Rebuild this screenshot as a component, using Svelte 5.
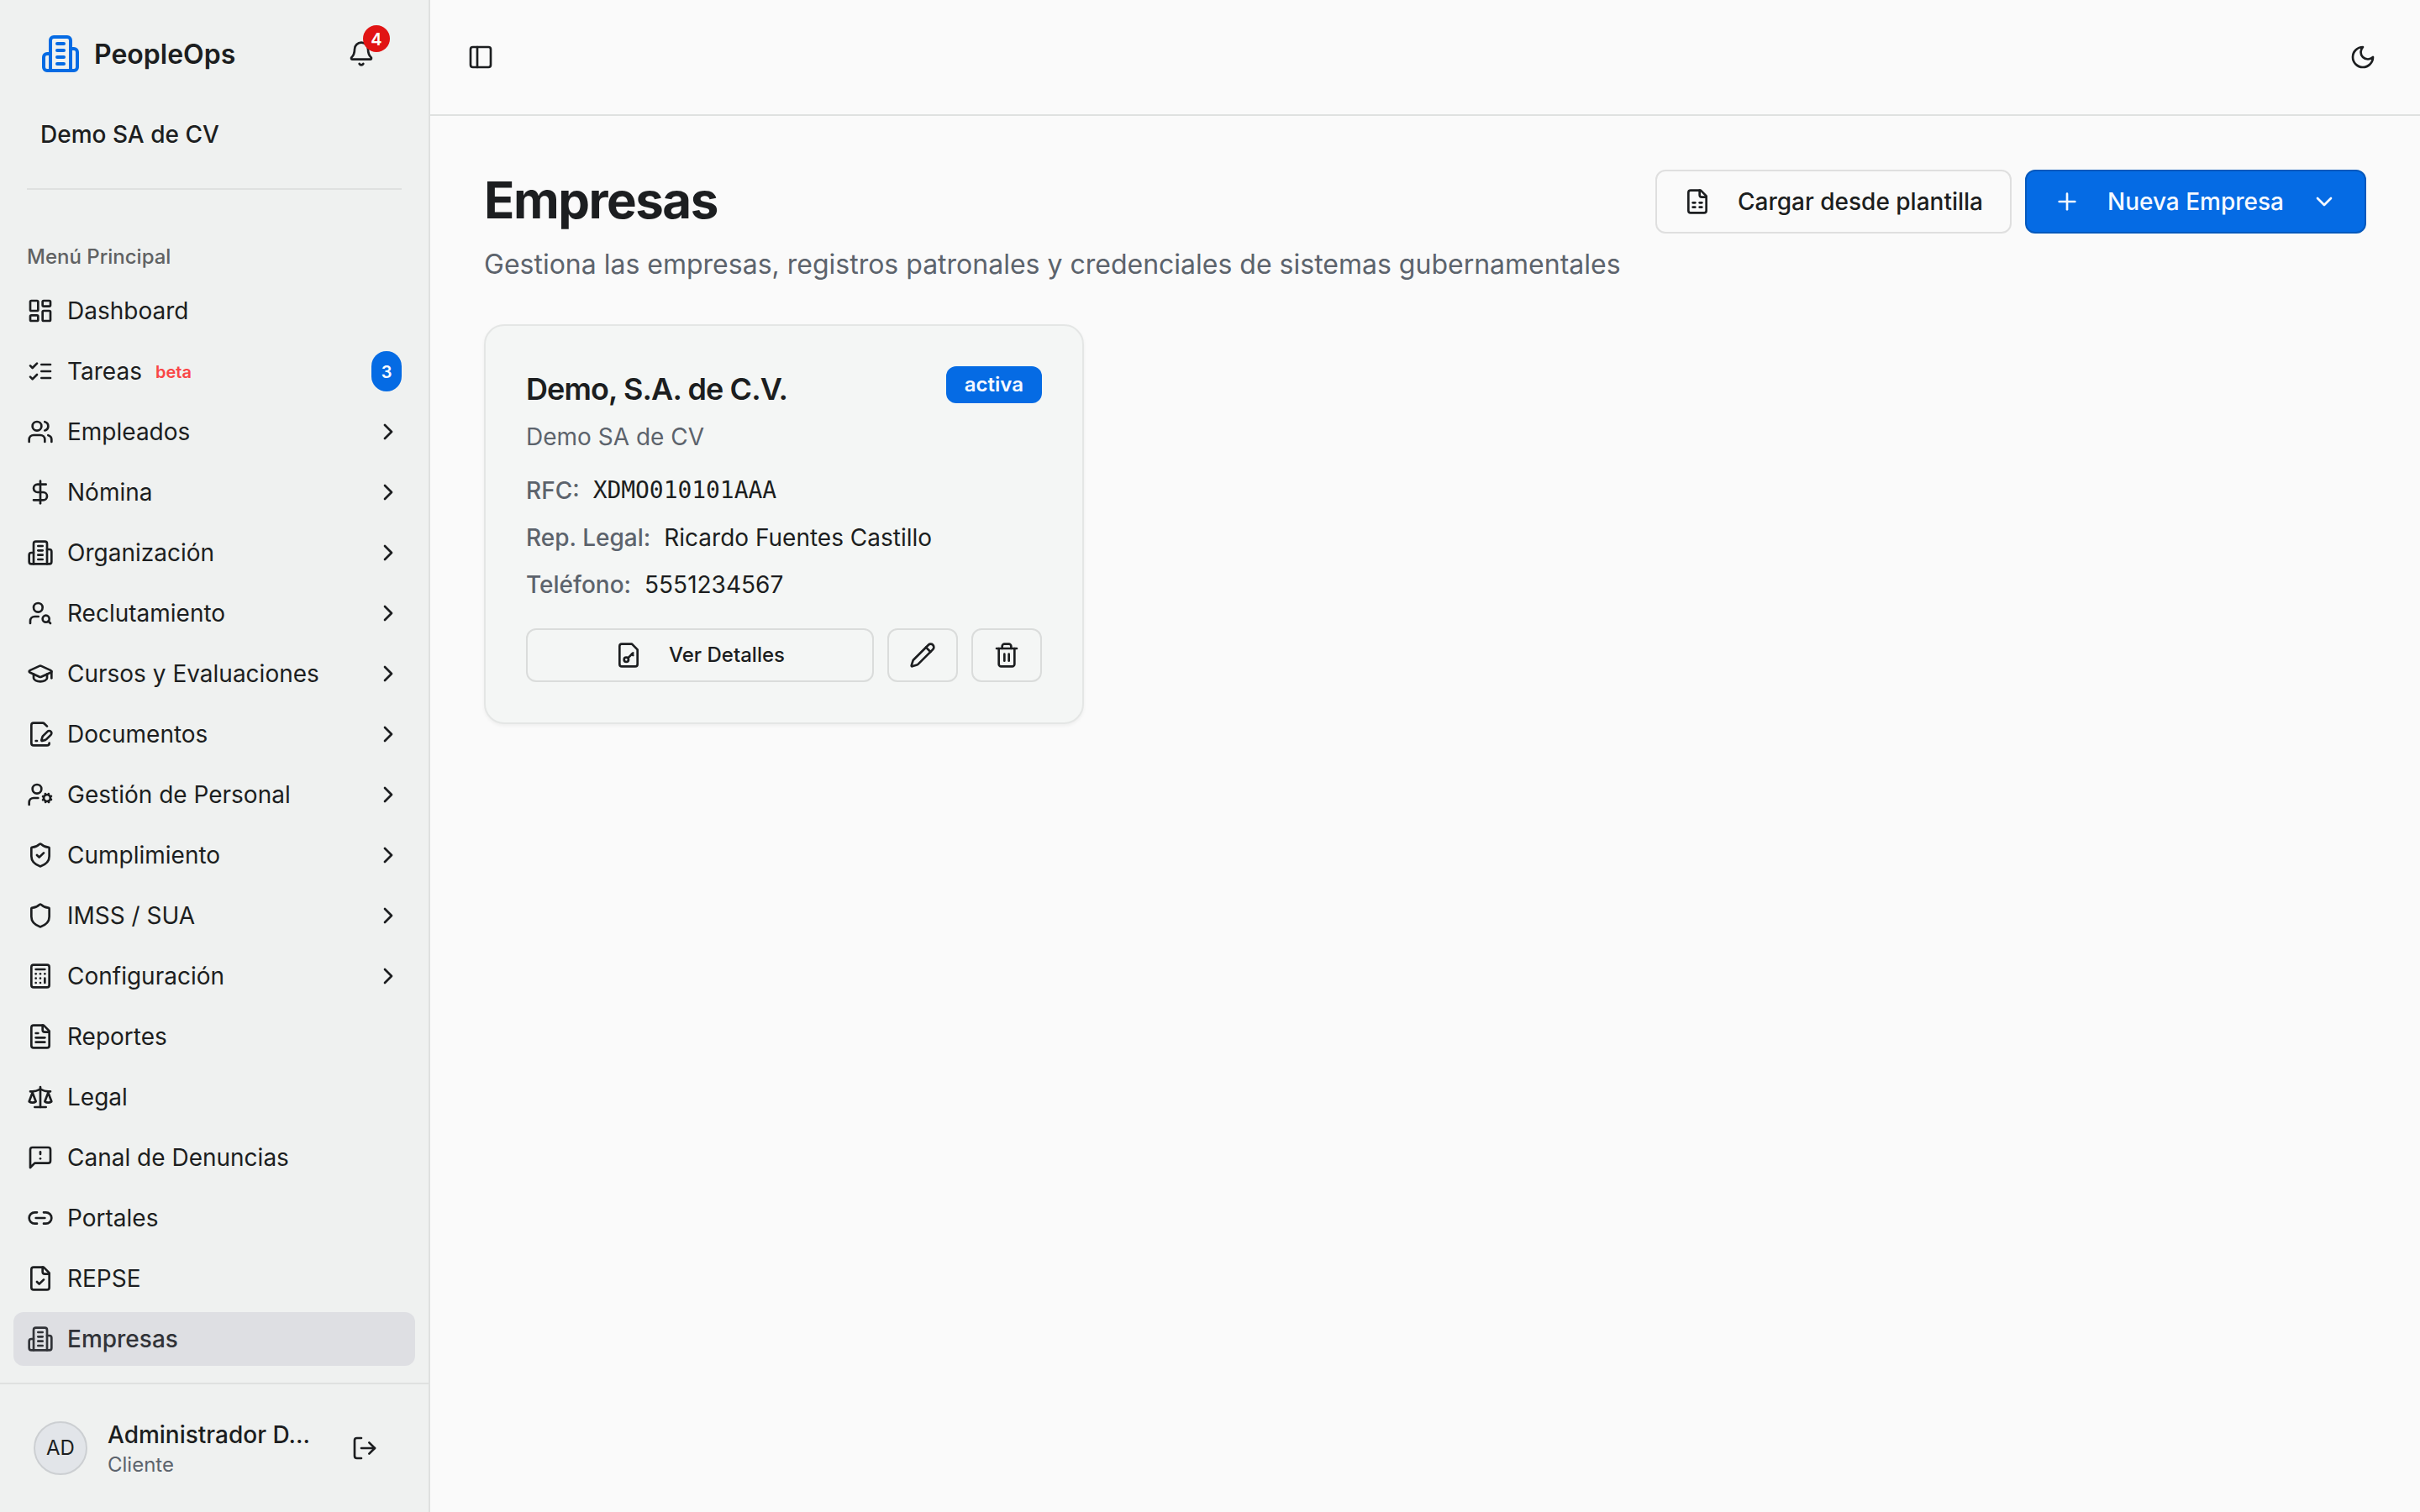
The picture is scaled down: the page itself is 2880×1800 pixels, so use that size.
<script>
  const building =
    '<path d="M6 22V4a2 2 0 0 1 2-2h8a2 2 0 0 1 2 2v18Z"/><path d="M6 12H4a2 2 0 0 0-2 2v6a2 2 0 0 0 2 2h2"/><path d="M18 9h2a2 2 0 0 1 2 2v9a2 2 0 0 1-2 2h-2"/><path d="M10 6h4"/><path d="M10 10h4"/><path d="M10 14h4"/><path d="M10 18h4"/>';
  const shield =
    '<path d="M20 13c0 5-3.5 7.5-7.66 8.95a1 1 0 0 1-.67-.01C7.5 20.5 4 18 4 13V6a1 1 0 0 1 1-1c2 0 4.5-1.2 6.24-2.72a1.17 1.17 0 0 1 1.52 0C14.51 3.81 17 5 19 5a1 1 0 0 1 1 1z"/>';
  const sheet = '<path d="M15 2H6a2 2 0 0 0-2 2v16a2 2 0 0 0 2 2h12a2 2 0 0 0 2-2V7Z"/>';
  const file = sheet + '<path d="M14 2v4a2 2 0 0 0 2 2h4"/>';

  const icons = {
    building,
    shield,
    bell: '<path d="M10.268 21a2 2 0 0 0 3.464 0"/><path d="M3.262 15.326A1 1 0 0 0 4 17h16a1 1 0 0 0 .74-1.673C19.41 13.956 18 12.499 18 8A6 6 0 0 0 6 8c0 4.499-1.411 5.956-2.738 7.326"/>',
    dashboard:
      '<rect width="7" height="9" x="3" y="3" rx="1"/><rect width="7" height="5" x="14" y="3" rx="1"/><rect width="7" height="9" x="14" y="12" rx="1"/><rect width="7" height="5" x="3" y="16" rx="1"/>',
    tasks: '<path d="m3 17 2 2 4-4"/><path d="m3 7 2 2 4-4"/><path d="M13 6h8"/><path d="M13 12h8"/><path d="M13 18h8"/>',
    users:
      '<path d="M16 21v-2a4 4 0 0 0-4-4H6a4 4 0 0 0-4 4v2"/><circle cx="9" cy="7" r="4"/><path d="M22 21v-2a4 4 0 0 0-3-3.87"/><path d="M16 3.13a4 4 0 0 1 0 7.75"/>',
    dollar: '<path d="M12 2v20"/><path d="M17 5H9.5a3.5 3.5 0 0 0 0 7h5a3.5 3.5 0 0 1 0 7H6"/>',
    userSearch:
      '<circle cx="10" cy="7" r="4"/><path d="M10.3 15H7a4 4 0 0 0-4 4v2"/><circle cx="17" cy="17" r="3"/><path d="m21 21-1.9-1.9"/>',
    cap: '<path d="M21.42 10.922a1 1 0 0 0-.019-1.838L12.83 5.18a2 2 0 0 0-1.66 0L2.6 9.08a1 1 0 0 0 0 1.832l8.57 3.908a2 2 0 0 0 1.66 0z"/><path d="M22 10v6"/><path d="M6 12.5V16a6 3 0 0 0 12 0v-3.5"/>',
    filePen:
      '<path d="m18 5-2.414-2.414A2 2 0 0 0 14.172 2H6a2 2 0 0 0-2 2v16a2 2 0 0 0 2 2h12a2 2 0 0 0 2-2"/><path d="M21.378 12.626a1 1 0 0 0-3.004-3.004l-4.01 4.012a2 2 0 0 0-.506.854l-.837 2.87a.5.5 0 0 0 .62.62l2.87-.837a2 2 0 0 0 .854-.506z"/><path d="M8 18h1"/>',
    userCog:
      '<circle cx="18" cy="15" r="3"/><circle cx="9" cy="7" r="4"/><path d="M10 15H6a4 4 0 0 0-4 4v2"/><path d="m21.7 16.4-.9-.3"/><path d="m15.2 13.9-.9-.3"/><path d="m16.6 18.7.3-.9"/><path d="m19.1 12.2.3-.9"/><path d="m19.6 18.7-.4-1"/><path d="m16.8 12.3-.4-1"/><path d="m14.3 16.6 1-.4"/><path d="m20.7 13.8 1-.4"/>',
    shieldCheck: shield + '<path d="m9 12 2 2 4-4"/>',
    calculator:
      '<rect width="16" height="20" x="4" y="2" rx="2"/><path d="M8 6h8"/><path d="M16 14v4"/><path d="M16 10h.01"/><path d="M12 10h.01"/><path d="M8 10h.01"/><path d="M12 14h.01"/><path d="M8 14h.01"/><path d="M12 18h.01"/><path d="M8 18h.01"/>',
    fileText: file + '<path d="M10 9H8"/><path d="M16 13H8"/><path d="M16 17H8"/>',
    scale:
      '<path d="m16 16 3-8 3 8c-.87.65-1.92 1-3 1s-2.13-.35-3-1Z"/><path d="m2 16 3-8 3 8c-.87.65-1.92 1-3 1s-2.13-.35-3-1Z"/><path d="M7 21h10"/><path d="M12 3v18"/><path d="M3 7h2c2 0 5-1 7-2 2 1 5 2 7 2h2"/>',
    message:
      '<path d="M21 15a2 2 0 0 1-2 2H7l-4 4V5a2 2 0 0 1 2-2h14a2 2 0 0 1 2 2z"/><path d="M12 7v2"/><path d="M12 13h.01"/>',
    link: '<path d="M9 17H7A5 5 0 0 1 7 7h2"/><path d="M15 7h2a5 5 0 1 1 0 10h-2"/><path d="M8 12h8"/>',
    fileCheck: file + '<path d="m9 15 2 2 4-4"/>',
    fileSheet: file + '<path d="M8 13h2"/><path d="M14 13h2"/><path d="M8 17h2"/><path d="M14 17h2"/>',
    fileKey: sheet + '<circle cx="10" cy="16" r="2"/><path d="m16 10-4.5 4.5"/><path d="m15 11 1 1"/>',
    logout: '<path d="M9 21H5a2 2 0 0 1-2-2V5a2 2 0 0 1 2-2h4"/><path d="m16 17 5-5-5-5"/><path d="M21 12H9"/>',
    panel: '<rect width="18" height="18" x="3" y="3" rx="2"/><path d="M9 3v18"/>',
    moon: '<path d="M12 3a6 6 0 0 0 9 9 9 9 0 1 1-9-9Z"/>',
    plus: '<path d="M5 12h14"/><path d="M12 5v14"/>',
    chevronRight: '<path d="m9 18 6-6-6-6"/>',
    chevronDown: '<path d="m6 9 6 6 6-6"/>',
    pencil:
      '<path d="M21.174 6.812a1 1 0 0 0-3.986-3.987L3.842 16.174a2 2 0 0 0-.5.83l-1.321 4.352a.5.5 0 0 0 .623.622l4.353-1.32a2 2 0 0 0 .83-.497z"/><path d="m15 5 4 4"/>',
    trash:
      '<path d="M3 6h18"/><path d="M19 6v14c0 1-1 2-2 2H7c-1 0-2-1-2-2V6"/><path d="M8 6V4c0-1 1-2 2-2h4c1 0 2 1 2 2v2"/><path d="M10 11v6"/><path d="M14 11v6"/>'
  };

  const menu = [
    { label: 'Dashboard', icon: 'dashboard' },
    { label: 'Tareas', icon: 'tasks', tag: 'beta', count: 3 },
    { label: 'Empleados', icon: 'users', sub: true },
    { label: 'Nómina', icon: 'dollar', sub: true },
    { label: 'Organización', icon: 'building', sub: true },
    { label: 'Reclutamiento', icon: 'userSearch', sub: true },
    { label: 'Cursos y Evaluaciones', icon: 'cap', sub: true },
    { label: 'Documentos', icon: 'filePen', sub: true },
    { label: 'Gestión de Personal', icon: 'userCog', sub: true },
    { label: 'Cumplimiento', icon: 'shieldCheck', sub: true },
    { label: 'IMSS / SUA', icon: 'shield', sub: true },
    { label: 'Configuración', icon: 'calculator', sub: true },
    { label: 'Reportes', icon: 'fileText' },
    { label: 'Legal', icon: 'scale' },
    { label: 'Canal de Denuncias', icon: 'message' },
    { label: 'Portales', icon: 'link' },
    { label: 'REPSE', icon: 'fileCheck' },
    { label: 'Empresas', icon: 'building' }
  ];

  let active = $state('Empresas');

  const empresas = [
    {
      nombre: 'Demo, S.A. de C.V.',
      comercial: 'Demo SA de CV',
      estado: 'activa',
      rfc: 'XDMO010101AAA',
      representante: 'Ricardo Fuentes Castillo',
      telefono: '5551234567'
    }
  ];
</script>

{#snippet icon(name)}
  <svg class="icon" viewBox="0 0 24 24" aria-hidden="true">{@html icons[name]}</svg>
{/snippet}

<div class="app">
  <aside class="sidebar">
    <div class="sidebar-head">
      <div class="brand">
        <span class="brand-logo">{@render icon('building')}</span>
        <span class="brand-name">PeopleOps</span>
        <button class="bell" aria-label="Notificaciones">
          {@render icon('bell')}
          <span class="bell-count">4</span>
        </button>
      </div>
      <div class="tenant">Demo SA de CV</div>
    </div>
    <hr class="divider" />

    <nav class="menu">
      <div class="menu-title">Menú Principal</div>
      {#each menu as item}
        <button
          class="menu-item"
          class:active={active === item.label}
          onclick={() => (active = item.label)}
        >
          {@render icon(item.icon)}
          <span>{item.label}</span>
          {#if item.tag}
            <span class="tag">{item.tag}</span>
          {/if}
          {#if item.count}
            <span class="count">{item.count}</span>
          {/if}
          {#if item.sub}
            <span class="arrow">{@render icon('chevronRight')}</span>
          {/if}
        </button>
      {/each}
    </nav>

    <div class="user">
      <div class="avatar">AD</div>
      <div class="user-info">
        <div class="user-name">Administrador D…</div>
        <div class="user-role">Cliente</div>
      </div>
      <button class="logout" aria-label="Cerrar sesión">{@render icon('logout')}</button>
    </div>
  </aside>

  <div class="main">
    <header class="topbar">
      <button class="toggle" aria-label="Barra lateral">{@render icon('panel')}</button>
      <button class="theme" aria-label="Tema">{@render icon('moon')}</button>
    </header>

    <main class="content">
      <div class="page-head">
        <div>
          <h1>Empresas</h1>
          <p class="lead">
            Gestiona las empresas, registros patronales y credenciales de sistemas gubernamentales
          </p>
        </div>
        <div class="actions">
          <button class="btn">{@render icon('fileSheet')}Cargar desde plantilla</button>
          <button class="btn primary">
            {@render icon('plus')}Nueva Empresa{@render icon('chevronDown')}
          </button>
        </div>
      </div>

      <div class="grid">
        {#each empresas as empresa}
          <article class="card">
            <div class="card-head">
              <h2>{empresa.nombre}</h2>
              <span class="badge">{empresa.estado}</span>
            </div>
            <p class="card-sub">{empresa.comercial}</p>
            <dl class="facts">
              <div><dt>RFC:</dt><dd class="mono">{empresa.rfc}</dd></div>
              <div><dt>Rep. Legal:</dt><dd>{empresa.representante}</dd></div>
              <div><dt>Teléfono:</dt><dd>{empresa.telefono}</dd></div>
            </dl>
            <div class="card-actions">
              <button class="btn small wide">{@render icon('fileKey')}Ver Detalles</button>
              <button class="btn small" aria-label="Editar">{@render icon('pencil')}</button>
              <button class="btn small" aria-label="Eliminar">{@render icon('trash')}</button>
            </div>
          </article>
        {/each}
      </div>
    </main>
  </div>
</div>

<style>
  :global(body) {
    margin: 0;
    background: #fafafa;
  }

  .app {
    display: flex;
    height: 1800px;
    font-family: Inter, 'Liberation Sans', sans-serif;
    font-size: 28px;
    line-height: 40px;
    color: #1c1e20;
  }

  .app :global(*) {
    box-sizing: border-box;
  }

  button {
    font: inherit;
    letter-spacing: inherit;
    color: inherit;
    background: none;
    border: 0;
    padding: 0;
  }

  h1, h2, p, dl, dd {
    margin: 0;
  }

  .icon {
    display: block;
    flex: none;
    width: 32px;
    height: 32px;
    fill: none;
    stroke: currentColor;
    stroke-width: 2;
    stroke-linecap: round;
    stroke-linejoin: round;
  }

  /* sidebar */
  .sidebar {
    display: flex;
    flex-direction: column;
    flex: none;
    width: 512px;
    background: #eff1f0;
    border-right: 2px solid #dfe1e0;
  }

  .sidebar-head {
    padding: 32px 48px;
  }

  .brand {
    display: flex;
    align-items: center;
    gap: 16px;
    height: 64px;
  }

  .brand-logo {
    color: #056be4;
  }

  .brand-logo .icon {
    width: 48px;
    height: 48px;
  }

  .brand-name {
    padding-top: 1px;
    font-size: 32px;
    font-weight: 600;
  }

  .bell {
    position: relative;
    display: grid;
    place-items: center;
    width: 64px;
    height: 64px;
    margin-left: auto;
  }

  .bell-count {
    position: absolute;
    top: -2px;
    right: -2px;
    width: 32px;
    height: 32px;
    border-radius: 50%;
    background: #e11414;
    color: #fff;
    font-size: 20px;
    font-weight: 600;
    line-height: 34px;
    text-align: center;
  }

  .tenant {
    margin-top: 32px;
    height: 64px;
    line-height: 64px;
    font-weight: 500;
  }

  .divider {
    width: 446px;
    height: 2px;
    margin: 0 32px;
    border: 0;
    background: #dfe1e0;
  }

  .menu {
    display: flex;
    flex-direction: column;
    flex: 1;
    gap: 8px;
    min-height: 0;
    padding: 48px 16px 0;
    overflow: hidden;
  }

  .menu-title {
    flex: none;
    height: 64px;
    margin-bottom: -8px;
    padding: 0 16px;
    font-size: 24px;
    font-weight: 500;
    line-height: 64px;
    color: #606263;
  }

  .menu-item {
    display: flex;
    align-items: center;
    flex: none;
    gap: 16px;
    height: 64px;
    padding: 0 16px;
    border-radius: 12px;
    text-align: left;
  }

  .menu-item.active {
    background: #dedfe3;
    color: #313338;
    font-weight: 500;
  }

  .tag {
    padding-top: 2px;
    font-size: 20px;
    font-weight: 600;
    color: #f94646;
  }

  .count {
    width: 36px;
    height: 48px;
    margin-left: auto;
    border-radius: 18px;
    background: #056be4;
    color: #fff;
    font-size: 20px;
    font-weight: 600;
    line-height: 50px;
    text-align: center;
  }

  .arrow {
    margin-left: auto;
  }

  .user {
    display: flex;
    align-items: center;
    gap: 24px;
    flex: none;
    height: 154px;
    padding: 0 44px 0 40px;
    border-top: 2px solid #dfe1e0;
  }

  .avatar {
    flex: none;
    width: 64px;
    height: 64px;
    border: 2px solid #cccfd2;
    border-radius: 50%;
    background: #e2e5e9;
    font-size: 24px;
    line-height: 60px;
    text-align: center;
  }

  .user-info {
    flex: 1;
    min-width: 0;
  }

  .user-name {
    font-weight: 500;
    white-space: nowrap;
  }

  .user-role {
    font-size: 24px;
    line-height: 32px;
    color: #5c636c;
  }

  .logout {
    display: grid;
    place-items: center;
    width: 64px;
    height: 64px;
  }

  /* main area */
  .main {
    display: flex;
    flex-direction: column;
    flex: 1;
    background: #fafafa;
  }

  .topbar {
    display: flex;
    align-items: center;
    justify-content: space-between;
    height: 138px;
    padding: 0 32px;
    border-bottom: 2px solid #dfe1e0;
  }

  .toggle,
  .theme {
    display: grid;
    place-items: center;
    width: 56px;
    height: 56px;
  }

  .theme {
    width: 72px;
    height: 72px;
  }

  .content {
    padding: 64px;
  }

  .page-head {
    display: flex;
    align-items: flex-start;
    justify-content: space-between;
  }

  h1 {
    font-size: 60px;
    font-weight: 700;
    line-height: 72px;
    letter-spacing: -0.025em;
  }

  .lead {
    margin-top: 16px;
    font-size: 32px;
    line-height: 49px;
    color: #5c636c;
  }

  .actions {
    display: flex;
    gap: 16px;
  }

  .btn {
    display: flex;
    align-items: center;
    justify-content: center;
    gap: 32px;
    height: 76px;
    padding: 0 32px;
    border: 2px solid #dfdfdf;
    border-radius: 12px;
    font-weight: 500;
    white-space: nowrap;
  }

  .btn.primary {
    background: #056be4;
    border-color: #0559bd;
    color: #f5f9ff;
  }

  .btn.small {
    width: 84px;
    height: 64px;
    padding: 0;
    border-color: #dadcdb;
    font-size: 24px;
  }

  .btn.wide {
    flex: 1;
  }

  .grid {
    display: grid;
    grid-template-columns: repeat(3, 714px);
    gap: 48px;
    margin-top: 47px;
  }

  .card {
    padding: 48px;
    border: 2px solid #e4e6e5;
    border-radius: 24px;
    background: #f4f6f5;
    box-shadow: 0 2px 4px rgba(0, 0, 0, 0.05);
  }

  .card-head {
    display: flex;
    align-items: flex-start;
    justify-content: space-between;
    height: 54px;
  }

  h2 {
    font-size: 36px;
    font-weight: 600;
    line-height: 54px;
    letter-spacing: -0.025em;
  }

  .badge {
    padding: 0 22px;
    border-radius: 12px;
    background: #056be4;
    color: #f5f9ff;
    font-size: 24px;
    font-weight: 600;
    line-height: 44px;
  }

  .card-sub {
    margin-top: 10px;
    color: #5c636c;
  }

  .facts {
    display: flex;
    flex-direction: column;
    gap: 16px;
    margin-top: 24px;
  }

  .facts div {
    display: flex;
    gap: 16px;
  }

  dt {
    color: #5c636c;
    font-weight: 500;
  }

  .mono {
    font-family: 'DejaVu Sans Mono', monospace;
    letter-spacing: -0.06px;
  }

  .card-actions {
    display: flex;
    gap: 16px;
    margin-top: 32px;
  }
</style>
